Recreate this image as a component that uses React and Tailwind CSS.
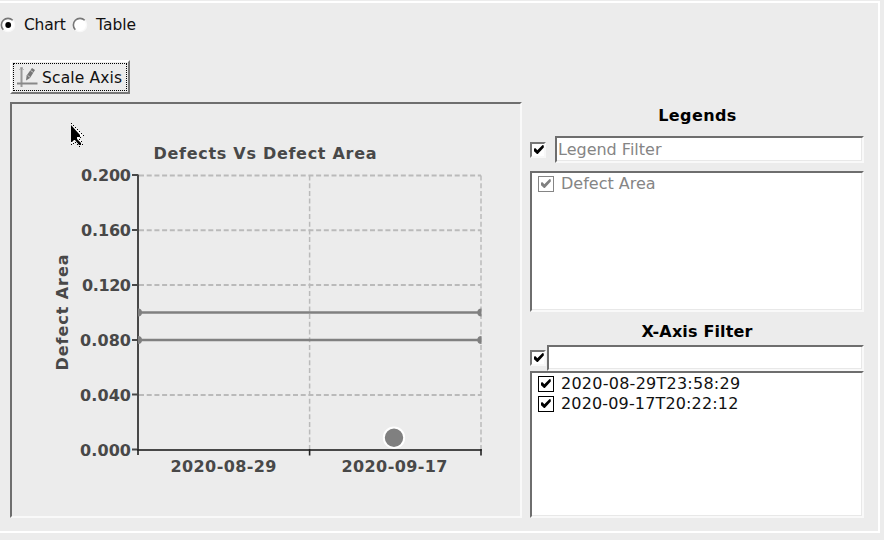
import React from "react";

const SUNKEN =
  "border-t-2 border-l-2 border-r-2 border-b-2 border-t-[#6e6e6e] border-l-[#6e6e6e] border-r-[#f9f9f9] border-b-[#f9f9f9]";
const FIELD = SUNKEN + " bg-white shadow-[inset_-1px_-1px_0_#e8e8e8]";

function Tick({ color = "#000" }) {
  return (
    <svg width="16" height="16" viewBox="0 0 16 16" className="block">
      <path d="M3 6.6 L4.6 6.2 L6.3 8.2 L11.6 3 L12.8 3.4 V5.6 L6.8 12 H6 L3 9.2 Z" fill={color} />
    </svg>
  );
}

function SunkenCheck() {
  return (
    <span className="block h-4 w-4 shrink-0 border-2 border-t-[#777] border-l-[#777] border-r-[#f8f8f8] border-b-[#f8f8f8] bg-white">
      <span className="-mt-[2px] -ml-px block">
        <Tick />
      </span>
    </span>
  );
}

function ListItem({ label, disabled, tracking }) {
  return (
    <div className={"flex h-5 items-center " + (disabled ? "text-[#858585]" : "text-[#111]")}>
      <span className={"block h-4 w-4 shrink-0 border " + (disabled ? "border-[#858585]" : "border-black")}>
        <span className="-mt-px -ml-px block">
          <Tick color={disabled ? "#808080" : "#000"} />
        </span>
      </span>
      <span className={"ml-[7px] " + tracking}>{label}</span>
    </div>
  );
}

function Radio({ checked }) {
  return (
    <svg width="16" height="16" viewBox="0 0 16 16" className="block shrink-0">
      <circle cx="8" cy="8" r="6.6" fill="#fff" stroke="#f8f8f8" strokeWidth="1.4" />
      <path d="M3.3 12.7 A6.6 6.6 0 0 1 12.7 3.3" fill="none" stroke="#777" strokeWidth="1.6" />
      {checked && <circle cx="8.2" cy="8" r="2.9" fill="#000" />}
    </svg>
  );
}

const yTicks = [
  { label: "0.200", y: 175.5, x: 81, w: 50 },
  { label: "0.160", y: 230.5, x: 81, w: 50 },
  { label: "0.120", y: 285.5, x: 82, w: 49 },
  { label: "0.080", y: 340.5, x: 80, w: 51 },
  { label: "0.040", y: 395, x: 80, w: 51 },
  { label: "0.000", y: 450, x: 80, w: 51 },
];

function Chart() {
  return (
    <svg
      width="507"
      height="411"
      viewBox="12 104 507 411"
      className="block font-bold"
      fill="#484848"
      fontSize="16"
    >
      <text x="153.5" y="159" textLength="223">Defects Vs Defect Area</text>
      <text transform="translate(68.4 370.5) rotate(-90)" textLength="116">Defect Area</text>
      {yTicks.map(({ label, y, x, w }) => (
        <text key={label} x={x} y={y + 5.7} textLength={w}>
          {label}
        </text>
      ))}
      <text x="170.5" y="472" textLength="106">2020-08-29</text>
      <text x="341.5" y="472" textLength="106">2020-09-17</text>
      <g stroke="#bababa" strokeWidth="2" strokeDasharray="5 2.7">
        {[175.5, 230.3, 285, 395].map((y) => (
          <path key={y} d={`M139 ${y} H481`} />
        ))}
        <path d="M309.6 450 V175 M481 450 V175" strokeWidth="1.5" />
      </g>
      <g stroke="#484848" strokeWidth="2">
        {yTicks.map(({ label, y }) => (
          <path key={label} d={`M132 ${y - 0.5} H138`} />
        ))}
        <path d="M138 174.5 V455" />
        <path d="M137 450 H481.7" />
      </g>
      <path d="M309.6 449 V455.5 M481 449 V455.5 M138 449 V451" stroke="#222" strokeWidth="1.6" />
      {[312.5, 340].map((y) => (
        <g key={y}>
          <path d={`M138 ${y} H481`} stroke="#808080" strokeWidth="2.4" />
          <path d={`M138 ${y - 4} A4 4 0 0 1 138 ${y + 4} Z M481.5 ${y - 4} A4.2 4 0 0 0 481.5 ${y + 4} Z`} fill="#808080" />
        </g>
      ))}
      <circle cx="394" cy="437.7" r="10.2" fill="#808080" stroke="#fff" strokeWidth="2" />
      {/* Mouse pointer resting over the plot */}
      <path d="M71 124 L83 136 H79 V140 H81 V145 H78 L75 139 L73 143 H71 Z" fill="#fff" />
      <path d="M71 125 L80 135 V137 H77 V139 L81 143 V145 H79 L75 140 H74 L72 142 H71 Z" fill="#000" />
      <path
        d="M71 123h1v1h-1zM73 125h1v1h-1zM75 127h1v1h-1zM77 129h1v1h-1zM79 131h1v1h-1zM81 133h1v1h-1zM83 135h1v1h-1zM80 137h1v1h-1zM79 139h1v1h-1zM81 141h1v1h-1zM82 144h1v1h-1zM79 146h1v1h-1zM77 144h1v1h-1zM75 142h1v1h-1zM73 143h1v1h-1zM71 144h1v1h-1z"
        fill="#000"
      />
    </svg>
  );
}

export default function App() {
  return (
    <div className="h-[540px] w-[884px] overflow-hidden bg-[#ececec] pt-px font-['DejaVu_Sans',sans-serif] text-base leading-5 text-[#111]">
      <div className="h-[532px] w-[880px] border-t-2 border-r-2 border-b-2 border-white">
        <div className="flex h-[22px] items-center pt-[22px]">
          <Radio checked />
          <span className="ml-2 w-[48px] text-[15.5px] tracking-[-0.2px]">Chart</span>
          <Radio />
          <span className="ml-2 text-[15.5px]">Table</span>
        </div>
        <div className="mt-[35px] ml-[10px] flex h-[34px] w-[120px] border-2 border-t-white border-r-[#777] border-b-[#777] border-l-white p-px">
          <div className="flex flex-1 items-center border border-dotted border-black">
            <svg width="21" height="22" viewBox="0 0 21 22" className="ml-[3px] shrink-0">
              <path d="M4.5 1 V21" stroke="#999" strokeWidth="2" fill="none" />
              <path d="M0 17.5 H20.5" stroke="#888" strokeWidth="2" fill="none" />
              <path d="M2.5 4 L4.5 1 L6.5 4" stroke="#aaa" fill="none" />
              <path d="M9 14.5 L9.6 9.5 L15 2 L18 4 L13 12 Z" fill="#777" />
              <path d="M10.6 9.5 L13.2 11.3 M13.5 4.5 L16.5 6.5" stroke="#ddd" strokeWidth="0.8" />
            </svg>
            <span className="ml-[4px] whitespace-nowrap pt-px text-[15.5px] tracking-[0.15px]">Scale Axis</span>
          </div>
        </div>
        <div className="mt-[8px] ml-[10px] flex gap-[8px]">
          <div className={"h-[416px] w-[512px] " + SUNKEN}>
            <Chart />
          </div>
          <div className="flex h-[416px] w-[334px] flex-col">
            <div className="mt-[4px] ml-px h-5 text-center font-bold tracking-[0.4px] text-black">Legends</div>
            <div className="mt-[10px] flex h-[27px] items-center gap-[9px]">
              <SunkenCheck />
              <div className={"flex h-[27px] flex-1 items-center pl-px text-[#858585] " + FIELD}>Legend Filter</div>
            </div>
            <div className={"mt-[8px] h-[141px] pt-px pl-[6px] " + FIELD}>
              <ListItem label="Defect Area" disabled tracking="tracking-normal" />
            </div>
            <div className="mt-[10px] h-5 text-center font-bold tracking-[0.15px] text-black">X-Axis Filter</div>
            <div className="mt-[3px] flex h-[26px] items-center gap-px">
              <SunkenCheck />
              <div className={"h-[26px] flex-1 " + FIELD} />
            </div>
            <div className={"flex-1 pt-px pl-[6px] " + FIELD}>
              <ListItem label="2020-08-29T23:58:29" tracking="tracking-[0.25px]" />
              <ListItem label="2020-09-17T20:22:12" tracking="tracking-[0.15px]" />
            </div>
          </div>
        </div>
      </div>
    </div>
  );
}
